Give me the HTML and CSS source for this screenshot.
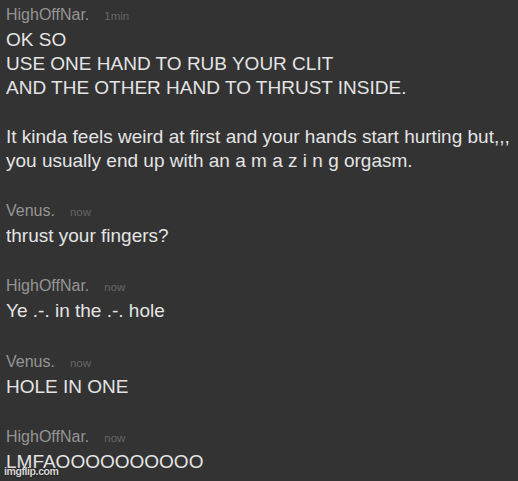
FILE: index.html
```html
<!DOCTYPE html>
<html>
<head>
<meta charset="utf-8">
<link rel="stylesheet" href="styles.css">
</head>
<body>
<div class="chat">
  <div class="msg">
    <div class="head"><span class="name">HighOffNar.</span><span class="time">1min</span></div>
    <div class="text">OK SO<br>USE ONE HAND TO RUB YOUR CLIT<br>AND THE OTHER HAND TO THRUST INSIDE.<br><br>It kinda feels weird at first and your hands start hurting but,,,<br>you usually end up with an a m a z i n g orgasm.</div>
  </div>
  <div class="msg">
    <div class="head"><span class="name">Venus.</span><span class="time">now</span></div>
    <div class="text">thrust your fingers?</div>
  </div>
  <div class="msg">
    <div class="head"><span class="name">HighOffNar.</span><span class="time">now</span></div>
    <div class="text">Ye .-. in the .-. hole</div>
  </div>
  <div class="msg">
    <div class="head"><span class="name">Venus.</span><span class="time">now</span></div>
    <div class="text">HOLE IN ONE</div>
  </div>
  <div class="msg">
    <div class="head"><span class="name">HighOffNar.</span><span class="time">now</span></div>
    <div class="text">LMFAOOOOOOOOOO</div>
  </div>
  <div class="watermark">imgflip.com</div>
</div>
</body>
</html>
```
FILE: styles.css
```css
html, body {
  margin: 0;
  padding: 0;
  background: #333333;
}
.chat {
  width: 518px;
  height: 481px;
  box-sizing: border-box;
  padding: 4px 6px 0 6px;
  font-family: "Liberation Sans", Arial, sans-serif;
  position: relative;
  overflow: hidden;
  display: flex;
  flex-direction: column;
  gap: 27px;
}
.head {
  display: flex;
  align-items: baseline;
  gap: 15px;
  height: 24px;
  line-height: 22px;
}
.name {
  color: #959595;
  font-size: 16px;
}
.time {
  color: #666666;
  font-size: 11.5px;
}
.text {
  color: #e4e4e4;
  font-size: 19px;
  line-height: 24.2px;
}
.watermark {
  position: absolute;
  left: 4px;
  bottom: 4px;
  color: #ffffff;
  font-size: 10.5px;
  line-height: 12px;
  font-weight: bold;
  letter-spacing: -0.4px;
  opacity: 0.8;
  text-shadow: 0 0 2px #000;
}
```
